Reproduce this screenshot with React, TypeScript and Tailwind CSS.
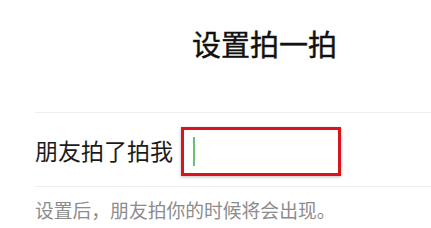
export default function App() {
  const font = { fontFamily: '"Noto Sans CJK SC", "Noto Sans", sans-serif' };
  return (
    <div className="w-[431px] h-[228px] bg-white overflow-hidden" style={font}>
      <div className="h-[112px] pl-[192px] pt-[23px]">
        <h1 className="text-[29px] leading-[40px] font-normal text-[#111111] [-webkit-text-stroke:0.4px_#111111]">设置拍一拍</h1>
      </div>
      <div className="ml-[35px] border-t border-[#eeeeee]" />
      <div className="h-[73px] pl-[35px] flex items-center">
        <span className="text-[23px] leading-[30px] text-[#1b1b1b]">朋友拍了拍我</span>
        <div className="ml-[8px] mt-[3px] w-[160px] h-[49px] border-[3px] border-[#d9141c] shadow-[0_1px_3px_rgba(0,0,0,0.25)] flex items-center pl-[9px]">
          <div className="w-[2px] h-[29px] bg-[#6bbf72]" />
        </div>
      </div>
      <div className="ml-[35px] border-t border-[#eeeeee]" />
      <p className="pl-[35px] pt-[11px] text-[18.8px] leading-[24px] text-[#8c8c8c]">设置后，朋友拍你的时候将会出现。</p>
    </div>
  );
}
